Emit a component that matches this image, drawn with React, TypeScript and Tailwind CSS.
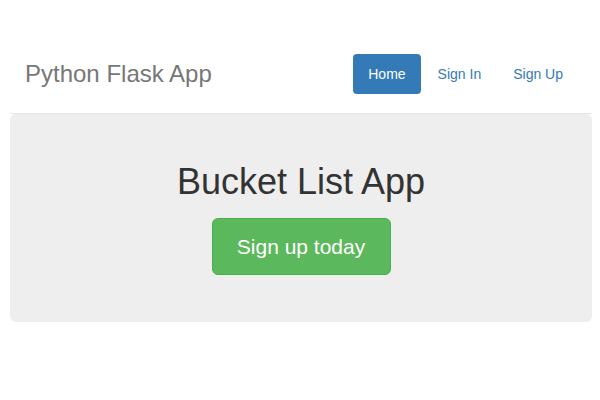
export default function App() {
  return (
    <div className="min-h-screen bg-white pl-[10px] pr-[8px] font-['Liberation_Sans',Arial,sans-serif] text-[14px] text-[#333]">
      {/* Header */}
      <header className="flex items-center justify-between border-b border-[#e5e5e5] pl-[15px] pr-[14px] pt-[54px] pb-[19px]">
        <h3 className="text-[24px] leading-[40px] text-[#777]">Python Flask App</h3>
        <nav>
          <ul className="flex gap-[2px]">
            <li>
              <a href="#" className="block rounded-[4px] bg-[#337ab7] px-[15px] py-[10px] leading-[20px] text-white">
                Home
              </a>
            </li>
            <li>
              <a href="#" className="block rounded-[4px] px-[15px] py-[10px] leading-[20px] text-[#337ab7]">
                Sign In
              </a>
            </li>
            <li>
              <a href="#" className="block rounded-[4px] px-[15px] py-[10px] leading-[20px] text-[#337ab7]">
                Sign Up
              </a>
            </li>
          </ul>
        </nav>
      </header>

      {/* Jumbotron */}
      <section className="flex flex-col items-center rounded-[6px] bg-[#eeeeee] pt-[48px] pb-[47px]">
        <h1 className="mb-[16px] text-[36px] leading-[40px] text-[#333]">Bucket List App</h1>
        <a
          href="#"
          className="flex h-[57px] w-[179px] items-center justify-center rounded-[6px] border border-[#4cae4c] bg-[#5cb85c] text-[21px] text-white"
        >
          Sign up today
        </a>
      </section>
    </div>
  );
}
